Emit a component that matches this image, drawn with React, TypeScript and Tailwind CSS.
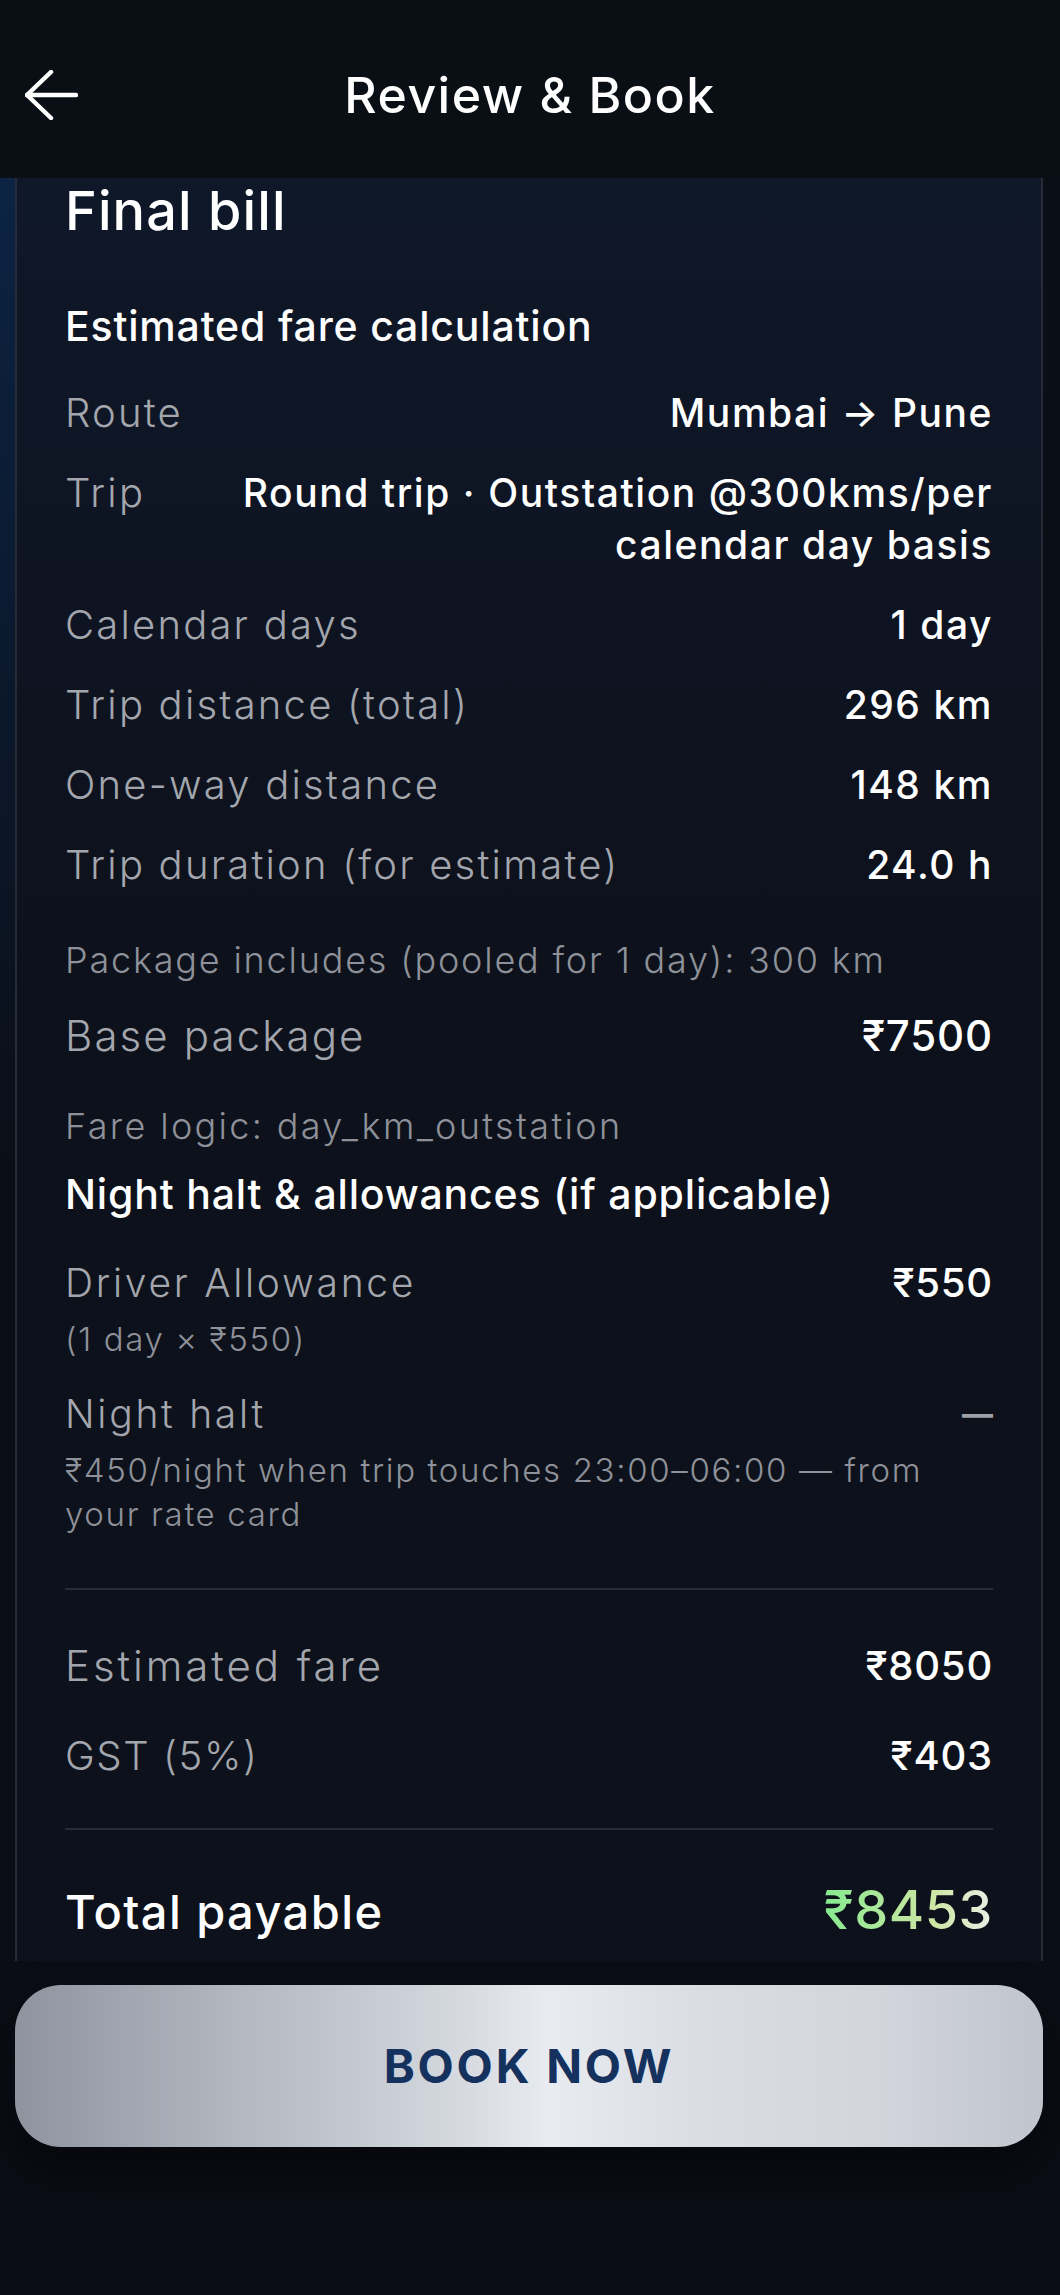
import type { ReactNode } from 'react';

function BackArrow() {
  return (
    <svg width="53" height="50" viewBox="0 0 53 50" fill="none" stroke="white" strokeWidth="4.5" strokeLinecap="round" strokeLinejoin="round">
      <path d="M51 25H2" />
      <path d="M26 2L2 25L26 48" />
    </svg>
  );
}

function Row({ label, value }: { label: ReactNode; value: ReactNode }) {
  return (
    <div className="flex items-start justify-between gap-6">
      <span className="text-[40px] leading-[52px] font-light tracking-[0.055em] text-[#a3a6ad] whitespace-nowrap">{label}</span>
      <span className="text-right text-[39px] leading-[52px] font-medium tracking-[0.04em] text-white">{value}</span>
    </div>
  );
}

export default function App() {
  return (
    <div className="h-[2295px] w-full overflow-hidden bg-[#0a0d15] font-['Inter','Noto_Sans',sans-serif]">
      <header className="grid h-[178px] grid-cols-[1fr_auto_1fr] items-center bg-[#0a0e15] pt-[12px]">
        <div className="pl-[25px]">
          <BackArrow />
        </div>
        <h1 className="text-[50px] leading-[60px] font-medium tracking-[0.03em] text-white">Review &amp; Book</h1>
        <div />
      </header>

      <div className="h-[1783px] overflow-hidden bg-[radial-gradient(ellipse_at_0%_0%,#0c2343_0%,#0a0e16_40%)] pl-[15px] pr-[17px]">
        <div className="h-full border-x-2 border-[#262b36] bg-[linear-gradient(180deg,#0f1829_0%,#0e1422_22%,#0d111b_45%,#0d111b_100%)] px-[48px] pt-[3px]">
          <h2 className="text-[54px] leading-[60px] font-medium tracking-[0.02em] text-white">Final bill</h2>

          <h3 className="mt-[61px] text-[41px] leading-[48px] font-medium tracking-[0.02em] text-white">Estimated fare calculation</h3>

          <div className="mt-[37px] flex flex-col gap-[28px]">
            <Row label="Route" value="Mumbai → Pune" />
            <Row
              label="Trip"
              value={
                <>
                  Round trip · Outstation @300kms/per
                  <br />
                  calendar day basis
                </>
              }
            />
            <Row label="Calendar days" value="1 day" />
            <Row label="Trip distance (total)" value="296 km" />
            <Row label="One-way distance" value="148 km" />
            <Row label="Trip duration (for estimate)" value="24.0 h" />
          </div>

          <p className="mt-[47px] text-[36px] leading-[44px] font-light tracking-[0.05em] text-[#8e9199]">
            Package includes (pooled for 1 day): 300 km
          </p>

          <div className="mt-[28px] flex items-start justify-between">
            <span className="text-[42px] leading-[52px] font-light tracking-[0.05em] text-[#a3a6ad]">Base package</span>
            <span className="text-[42px] leading-[52px] font-medium tracking-[0.02em] text-white">₹7500</span>
          </div>

          <p className="mt-[42px] text-[36px] leading-[44px] font-light tracking-[0.065em] text-[#8e9199]">
            Fare logic: day_km_outstation
          </p>

          <h3 className="mt-[22px] text-[41px] leading-[48px] font-medium tracking-[0.02em] text-white">
            Night halt &amp; allowances (if applicable)
          </h3>

          <div className="mt-[39px] flex items-start justify-between">
            <div className="flex flex-col">
              <span className="text-[39px] leading-[52px] font-light tracking-[0.07em] text-[#a3a6ad]">Driver Allowance</span>
              <span className="mt-2 text-[33px] leading-[44px] font-light tracking-[0.05em] text-[#8e9199]">(1 day × ₹550)</span>
            </div>
            <span className="text-[40px] leading-[52px] font-medium tracking-[0.02em] text-white">₹550</span>
          </div>

          <div className="mt-[27px] flex items-start justify-between gap-3">
            <div className="flex flex-col">
              <span className="text-[39px] leading-[52px] font-light tracking-[0.07em] text-[#a3a6ad]">Night halt</span>
              <span className="mt-2 whitespace-nowrap text-[33px] leading-[44px] font-light tracking-[0.05em] text-[#8e9199]">
                ₹450/night when trip touches 23:00–06:00 — from
                <br />
                your rate card
              </span>
            </div>
            <span className="text-[31px] leading-[52px] font-bold text-[#9ea1a8]">—</span>
          </div>

          <div className="mt-[52px] h-[2px] bg-[#262b35]" />

          <div className="mt-[50px] flex items-start justify-between">
            <span className="text-[42px] leading-[52px] font-light tracking-[0.07em] text-[#a3a6ad]">Estimated fare</span>
            <span className="text-[40px] leading-[52px] font-medium tracking-[0.02em] text-white">₹8050</span>
          </div>

          <div className="mt-[38px] flex items-start justify-between">
            <span className="text-[40px] leading-[52px] font-light tracking-[0.04em] text-[#a3a6ad]">GST (5%)</span>
            <span className="text-[40px] leading-[52px] font-medium tracking-[0.02em] text-white">₹403</span>
          </div>

          <div className="mt-[46px] h-[2px] bg-[#262b35]" />

          <div className="mt-[50px] flex items-baseline justify-between">
            <span className="text-[47px] leading-[60px] font-medium tracking-[0.03em] text-white">Total payable</span>
            <span className="bg-[linear-gradient(90deg,#86e98f_0%,#b4e79d_40%,#cde6a4_65%,#e8efe6_100%)] bg-clip-text text-[54px] leading-[60px] font-medium tracking-[0.01em] text-transparent">
              ₹8453
            </span>
          </div>
        </div>
      </div>

      <div className="pl-[15px] pr-[17px] pt-[24px]">
        <button className="flex h-[162px] w-full items-center justify-center rounded-[46px] bg-[linear-gradient(90deg,#8e939e_0%,#b3b8c1_22%,#cfd3da_40%,#e8ebf0_52%,#dadde3_66%,#d2d5dc_84%,#c0c4cc_100%)] shadow-[0_24px_48px_rgba(0,0,0,0.45)]">
          <span className="text-[47px] font-bold tracking-[0.06em] text-[#15315e]">BOOK NOW</span>
        </button>
      </div>
    </div>
  );
}
